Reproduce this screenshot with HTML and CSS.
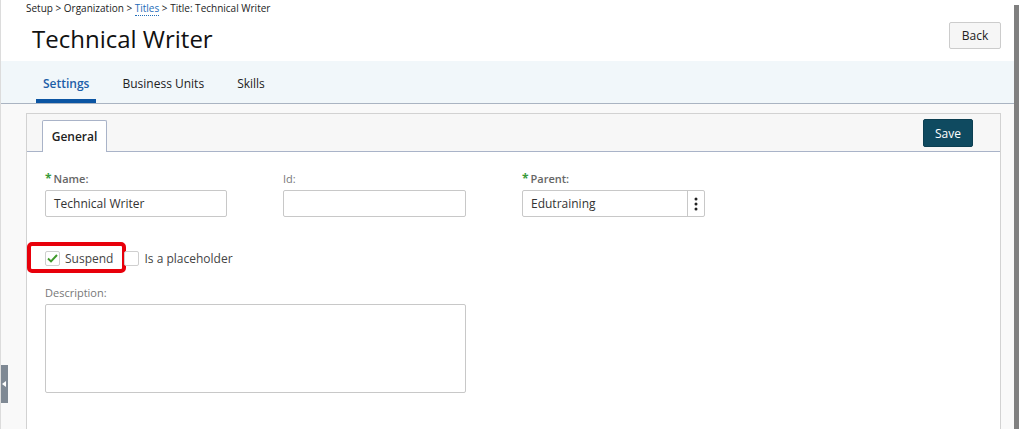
FILE: index.html
```html
<!DOCTYPE html>
<html lang="en">
<head>
<meta charset="utf-8">
<title>Technical Writer</title>
<link rel="stylesheet" href="styles.css">
</head>
<body>
<div class="frame">
  <header class="page-head">
    <div class="head-text">
      <div class="crumbs">Setup &gt; Organization &gt; <a class="crumb-link" href="#">Titles</a> &gt; Title: Technical Writer</div>
      <h1 class="title">Technical Writer</h1>
    </div>
    <button class="btn btn-back" type="button">Back</button>
  </header>

  <nav class="tabbar">
    <a class="tab tab-active" href="#">Settings</a>
    <a class="tab" href="#">Business Units</a>
    <a class="tab" href="#">Skills</a>
  </nav>

  <main class="content">
    <section class="panel">
      <div class="panel-head">
        <div class="subtab">General</div>
        <button class="btn btn-save" type="button">Save</button>
      </div>
      <div class="panel-body">
        <div class="field-row">
          <div class="field">
            <label class="label label-req"><span class="req">*</span>Name:</label>
            <div class="input">Technical Writer</div>
          </div>
          <div class="field">
            <label class="label">Id:</label>
            <div class="input"></div>
          </div>
          <div class="field">
            <label class="label label-req"><span class="req">*</span>Parent:</label>
            <div class="input input-picker">
              <span class="picker-value">Edutraining</span>
              <span class="picker-btn">
                <svg width="4" height="14" viewBox="0 0 4 14"><circle cx="2" cy="2" r="1.5" fill="#222"/><circle cx="2" cy="7" r="1.5" fill="#222"/><circle cx="2" cy="12" r="1.5" fill="#222"/></svg>
              </span>
            </div>
          </div>
        </div>

        <div class="check-row">
          <label class="check check-highlight">
            <span class="box">
              <svg width="11" height="9" viewBox="0 0 11 9"><path d="M1 4.6 L4 7.4 L10 1" fill="none" stroke="#3f9a2c" stroke-width="2"/></svg>
            </span>
            <span class="check-text">Suspend</span>
          </label>
          <label class="check">
            <span class="box"></span>
            <span class="check-text">Is a placeholder</span>
          </label>
        </div>

        <div class="field">
          <label class="label">Description:</label>
          <div class="textarea"></div>
        </div>
      </div>
    </section>
  </main>

  <div class="side-handle">
    <svg width="4" height="6" viewBox="0 0 4 6"><path d="M4 0 L0 3 L4 6 Z" fill="#fff"/></svg>
  </div>
</div>
</body>
</html>
```

FILE: styles.css
```css
html, body {
  margin: 0;
  padding: 0;
  background: #ffffff;
}

body {
  font-family: "Open Sans", "Liberation Sans", sans-serif;
  color: #333;
}

.frame {
  position: relative;
  width: 1014px;
  height: 429px;
  box-sizing: border-box;
  border-left: 1px solid #dcdcdc;
  background: #fff;
  box-shadow: 5px 5px 0 0 #808080;
  display: flex;
  flex-direction: column;
  overflow: hidden;
}

/* header */
.page-head {
  height: 61px;
  flex: none;
  display: flex;
  justify-content: space-between;
  align-items: flex-start;
  padding: 0 13px 0 25px;
}

.crumbs {
  font-size: 10px;
  line-height: 14px;
  margin-top: 1px;
  color: #222;
}

.crumb-link {
  color: #1f6db9;
  text-decoration: none;
  border-bottom: 1px dotted #1f6db9;
}

.title {
  margin: 9px 0 0 6px;
  font-size: 24px;
  font-weight: 400;
  line-height: 30px;
  color: #111;
}

.btn {
  font-family: "Open Sans", "Liberation Sans", sans-serif;
  font-size: 12px;
  border-radius: 2px;
  padding: 0;
  cursor: pointer;
}

.btn-back {
  margin-top: 22px;
  width: 52px;
  height: 27px;
  background: #f6f6f6;
  border: 1px solid #cccccc;
  color: #222;
}

/* tab bar */
.tabbar {
  flex: none;
  height: 42px;
  background: #f1f7fa;
  border-bottom: 1px solid #aab4c2;
  display: flex;
  gap: 19px;
  padding-left: 35px;
}

.tab {
  box-sizing: border-box;
  height: 42px;
  padding: 0 7px;
  display: flex;
  align-items: center;
  font-size: 12px;
  color: #222;
  text-decoration: none;
  border-bottom: 4px solid transparent;
  padding-top: 6px;
}

.tab-active {
  color: #1c5ea8;
  font-weight: 600;
  border-bottom-color: #0b55a3;
}

/* content */
.content {
  flex: 1;
  display: flex;
  background: #f9f9f9;
  padding: 9px 13px 0 25px;
  min-height: 0;
}

.panel {
  flex: 1;
  display: flex;
  flex-direction: column;
  background: #fff;
  border: 1px solid #d2d2d2;
  border-bottom: none;
}

.panel-head {
  flex: none;
  height: 37px;
  background: #f7f7f7;
  border-bottom: 1px solid #a9b3c8;
  display: flex;
  justify-content: space-between;
  align-items: flex-start;
  padding: 0 27px 0 15px;
}

.subtab {
  box-sizing: border-box;
  margin-top: 6px;
  height: 32px;
  margin-bottom: -1px;
  width: 65px;
  background: #fff;
  border: 1px solid #a9b3c8;
  border-bottom: none;
  border-radius: 2px 2px 0 0;
  display: flex;
  align-items: center;
  justify-content: center;
  font-size: 12px;
  font-weight: 600;
  color: #222;
}

.btn-save {
  margin-top: 5px;
  width: 50px;
  height: 28px;
  background: #0f4a60;
  border: 1px solid #0c3f52;
  color: #fff;
}

.panel-body {
  padding: 19px 18px 0 18px;
}

.field-row {
  display: flex;
  gap: 56px;
}

.field {
  display: flex;
  flex-direction: column;
}

.label {
  font-size: 11px;
  line-height: 15px;
  color: #777;
  margin-bottom: 4px;
}

.label-req {
  font-weight: 600;
  color: #666;
}

.req {
  color: #3a9a3a;
  font-weight: 700;
  font-size: 12px;
  margin-right: 2px;
}

.input {
  box-sizing: border-box;
  width: 182px;
  height: 27px;
  border: 1px solid #c8c8c8;
  border-radius: 2px;
  background: #fff;
  font-size: 12px;
  line-height: 25px;
  padding: 0 8px;
  color: #333;
}

.field + .field .input {
  width: 183px;
}

.input-picker {
  display: flex;
  padding-right: 0;
}

.picker-value {
  flex: 1;
}

.picker-btn {
  width: 16px;
  border-left: 1px solid #c8c8c8;
  display: flex;
  align-items: center;
  justify-content: center;
}

.check-row {
  display: flex;
  align-items: center;
  margin-top: 33px;
  height: 16px;
}

.check {
  position: relative;
  display: flex;
  align-items: center;
  font-size: 12px;
  color: #444;
}

.check + .check {
  margin-left: 11px;
}

.box {
  box-sizing: border-box;
  width: 15px;
  height: 15px;
  border: 1px solid #cfcfcf;
  border-radius: 2px;
  background: #fff;
  display: flex;
  align-items: center;
  justify-content: center;
  margin-right: 5px;
}

.check-highlight::after {
  content: "";
  position: absolute;
  left: -18px;
  top: -8px;
  width: 99px;
  height: 31px;
  box-sizing: border-box;
  border: 4px solid #e8000b;
  border-radius: 5px;
}

.check-row + .field {
  margin-top: 19px;
}

.textarea {
  box-sizing: border-box;
  width: 421px;
  height: 89px;
  border: 1px solid #c8c8c8;
  border-radius: 2px;
  background: #fff;
}

.side-handle {
  position: absolute;
  left: -1px;
  top: 365px;
  width: 8px;
  height: 38px;
  background: #7f8994;
  display: flex;
  align-items: center;
  justify-content: center;
}
```
